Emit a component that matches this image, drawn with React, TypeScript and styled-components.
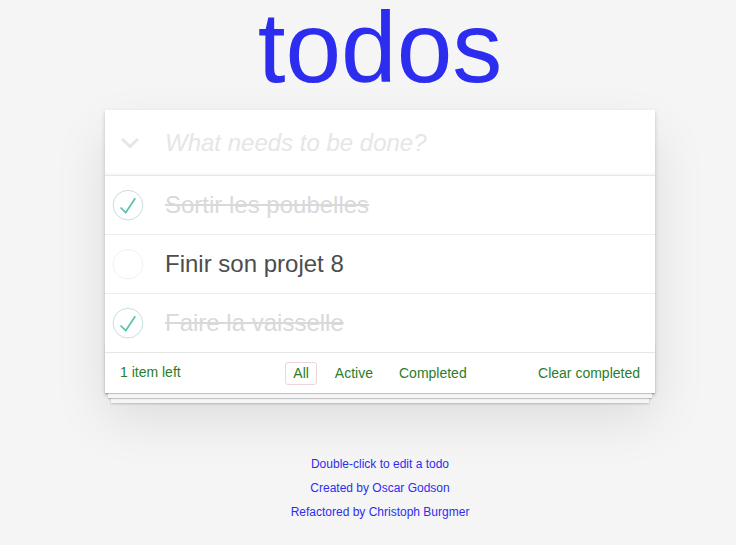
import React from "react";
import styled, { createGlobalStyle } from "styled-components";

const Global = createGlobalStyle`
  html, body { margin: 0; padding: 0; }
  body {
    background: #f5f5f5;
    font: 14px "Liberation Sans", Arial, sans-serif;
    line-height: 1.4em;
    color: #4d4d4d;
  }
`;

const Page = styled.div`
  padding-left: 24px;
`;

const Container = styled.div`
  width: 550px;
  margin: 0 auto;
`;

const Title = styled.h1`
  margin: 0 0 16px;
  font-size: 100px;
  line-height: 94px;
  font-weight: 400;
  text-align: center;
  color: #2d2df0;
`;

const App0 = styled.section`
  background: #fff;
  position: relative;
  box-shadow: 0 2px 4px 0 rgba(0, 0, 0, 0.2), 0 25px 50px 0 rgba(0, 0, 0, 0.1);
`;

const Header = styled.header`
  display: flex;
  align-items: center;
  height: 65px;
  box-shadow: inset 0 -2px 1px rgba(0, 0, 0, 0.03);
`;

const ToggleAll = styled.div`
  width: 45px;
  padding-left: 15px;
  display: flex;
  align-items: center;
`;

const NewTodo = styled.input`
  flex: 1;
  border: none;
  outline: none;
  background: transparent;
  padding: 0 16px 0 0;
  font: 24px "Liberation Sans", Arial, sans-serif;
  line-height: 33px;
  color: #4d4d4d;
  &::placeholder {
    font-style: italic;
    color: #e6e6e6;
  }
`;

const List = styled.ul`
  margin: 0;
  padding: 0;
  list-style: none;
  border-top: 1px solid #e6e6e6;
`;

const Item = styled.li`
  display: flex;
  align-items: center;
  height: 58px;
  border-bottom: 1px solid #ededed;
  &:last-child {
    border-bottom: none;
  }
`;

const Toggle = styled.div`
  width: 40px;
  height: 40px;
  margin-right: 20px;
  flex: none;
`;

const Label = styled.label<{ $done: boolean }>`
  font-size: 24px;
  line-height: 28px;
  color: ${(p) => (p.$done ? "#d9d9d9" : "#4d4d4d")};
  text-decoration: ${(p) => (p.$done ? "line-through" : "none")};
`;

const Footer = styled.footer`
  position: relative;
  display: grid;
  grid-template-columns: 1fr auto 1fr;
  grid-template-rows: 20px;
  align-items: center;
  height: 20px;
  padding: 10px 15px;
  border-top: 1px solid #e6e6e6;
  color: #2a7d2a;
  &::before {
    content: "";
    position: absolute;
    right: 0;
    bottom: 0;
    left: 0;
    height: 50px;
    overflow: hidden;
    pointer-events: none;
    box-shadow: 0 1px 1px rgba(0, 0, 0, 0.2), 0 8px 0 -3px #f6f6f6,
      0 9px 1px -3px rgba(0, 0, 0, 0.2), 0 16px 0 -6px #f6f6f6,
      0 17px 2px -6px rgba(0, 0, 0, 0.2);
  }
`;

const Count = styled.span`
  position: relative;
  text-align: left;
`;

const Filters = styled.ul`
  position: relative;
  display: flex;
  gap: 4px;
  margin: 0;
  padding: 0;
  list-style: none;
`;

const FilterLink = styled.a<{ $selected?: boolean }>`
  display: block;
  margin: 3px;
  padding: 3px 7px;
  line-height: 15px;
  border-radius: 3px;
  border: 1px solid ${(p) => (p.$selected ? "rgba(175, 47, 47, 0.2)" : "transparent")};
  color: inherit;
  text-decoration: none;
`;

const Clear = styled.span`
  position: relative;
  text-align: right;
  padding-top: 1px;
`;

const Info = styled.footer`
  margin-top: 65px;
  text-align: center;
  font-size: 12px;
  color: #2d2df0;
  p {
    margin: 12px 0;
    line-height: 1;
  }
`;

const Check = ({ done }: { done: boolean }) => (
  <svg width="40" height="40" viewBox="-10 -18 100 135">
    <circle cx="50" cy="50" r="50" fill="none" stroke={done ? "#bddad5" : "#ededed"} strokeWidth="3" />
    {done && <path fill="#5dc2af" d="M72 25L42 71 27 56l-4 4 20 20 34-52z" />}
  </svg>
);

const todos = [
  { text: "Sortir les poubelles", done: true },
  { text: "Finir son projet 8", done: false },
  { text: "Faire la vaisselle", done: true },
];

export default function App() {
  return (
    <>
      <Global />
      <Page>
        <Container>
          <Title>todos</Title>
          <App0>
            <Header>
              <ToggleAll>
                <svg width="20" height="12" viewBox="0 0 20 12">
                  <path d="M2 2 L10 9.5 L18 2" fill="none" stroke="#e6e6e6" strokeWidth="3" />
                </svg>
              </ToggleAll>
              <NewTodo placeholder="What needs to be done?" />
            </Header>
            <List>
              {todos.map((t) => (
                <Item key={t.text}>
                  <Toggle>
                    <Check done={t.done} />
                  </Toggle>
                  <Label $done={t.done}>{t.text}</Label>
                </Item>
              ))}
            </List>
            <Footer>
              <Count>1 item left</Count>
              <Filters>
                <li><FilterLink $selected>All</FilterLink></li>
                <li><FilterLink>Active</FilterLink></li>
                <li><FilterLink>Completed</FilterLink></li>
              </Filters>
              <Clear>Clear completed</Clear>
            </Footer>
          </App0>
          <Info>
            <p>Double-click to edit a todo</p>
            <p>Created by Oscar Godson</p>
            <p>Refactored by Christoph Burgmer</p>
          </Info>
        </Container>
      </Page>
    </>
  );
}
